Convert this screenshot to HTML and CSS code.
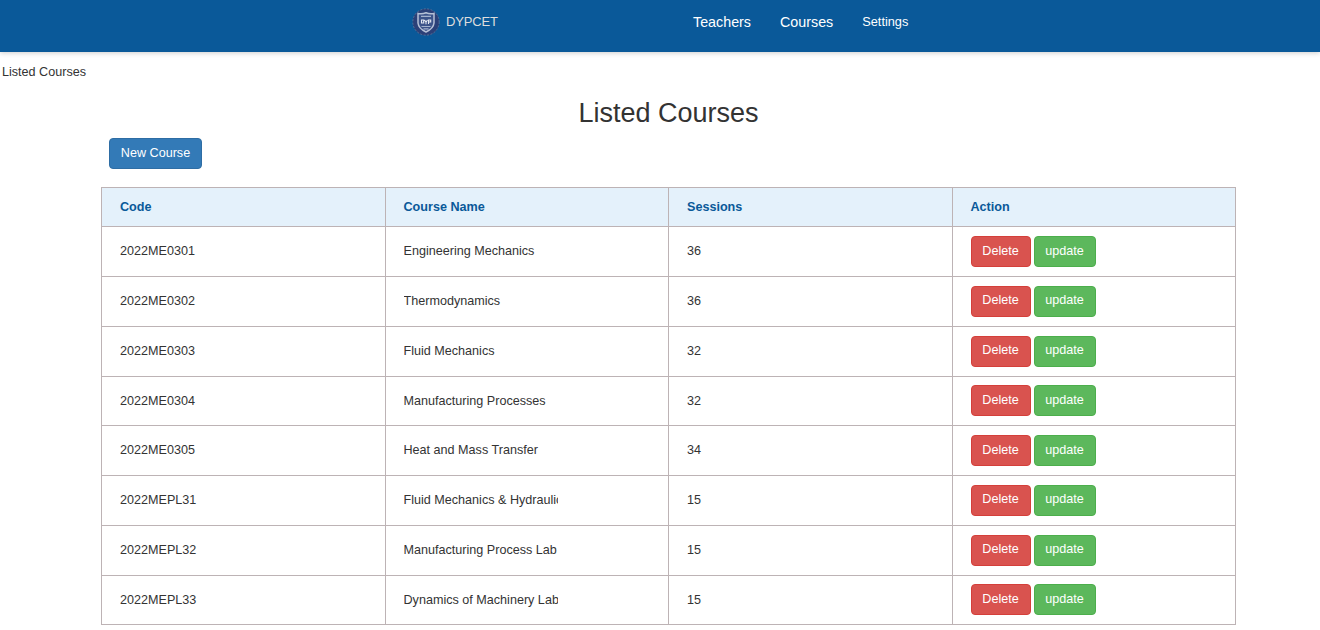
FILE: index.html
```html
<!DOCTYPE html>
<html lang="en">
<head>
<meta charset="utf-8">
<title>Listed Courses</title>
<link rel="stylesheet" href="styles.css">
</head>
<body>
<header class="navbar">
  <a class="brand">
    <svg class="logo" viewBox="0 0 28 28">
      <circle cx="14" cy="14" r="13.3" fill="#2b4078"/>
      <circle cx="14" cy="14" r="13.2" fill="none" stroke="#6c7f9f" stroke-width=".7" stroke-dasharray="2 1.5"/>
      <path d="M6 5.5 Q10 6.5 14 4.8 Q18 6.5 22 5.5 V15 Q21.5 20.5 14 24 Q6.500 20.5 6 15Z" fill="#3c5389" stroke="#b5c0d6" stroke-width="1.5"/>
      <path d="M9 8.300h10M9.500 18.500h9M11.500 20.800h5" stroke="#a3b1cd" stroke-width="1.2"/>
      <path d="M9.500 11.500v4M9.500 12h2.200v3h-2M12.500 12l1.500 2 1.500-2M14 14v2.300M16.500 16V12h2.200v2h-2" fill="none" stroke="#e4e8f1" stroke-width="1.1"/>
    </svg>
    <span class="brand-name">DYPCET</span>
  </a>
  <nav class="nav"><a>Teachers</a><a>Courses</a><a class="small">Settings</a></nav>
</header>
<div class="crumb">Listed Courses</div>
<main class="content">
  <h2 class="title">Listed Courses</h2>
  <button class="btn new">New Course</button>
  <div class="table">
    <div class="row head"><div>Code</div><div>Course Name</div><div>Sessions</div><div>Action</div></div>
    <div class="row"><div>2022ME0301</div><div><span class="name">Engineering Mechanics</span></div><div>36</div><div><button class="btn delete">Delete</button><button class="btn update">update</button></div></div>
    <div class="row"><div>2022ME0302</div><div><span class="name">Thermodynamics</span></div><div>36</div><div><button class="btn delete">Delete</button><button class="btn update">update</button></div></div>
    <div class="row"><div>2022ME0303</div><div><span class="name">Fluid Mechanics</span></div><div>32</div><div><button class="btn delete">Delete</button><button class="btn update">update</button></div></div>
    <div class="row"><div>2022ME0304</div><div><span class="name">Manufacturing Processes</span></div><div>32</div><div><button class="btn delete">Delete</button><button class="btn update">update</button></div></div>
    <div class="row"><div>2022ME0305</div><div><span class="name">Heat and Mass Transfer</span></div><div>34</div><div><button class="btn delete">Delete</button><button class="btn update">update</button></div></div>
    <div class="row"><div>2022MEPL31</div><div><span class="name">Fluid Mechanics &amp; Hydraulic</span></div><div>15</div><div><button class="btn delete">Delete</button><button class="btn update">update</button></div></div>
    <div class="row"><div>2022MEPL32</div><div><span class="name">Manufacturing Process Lab</span></div><div>15</div><div><button class="btn delete">Delete</button><button class="btn update">update</button></div></div>
    <div class="row"><div>2022MEPL33</div><div><span class="name">Dynamics of Machinery Lab</span></div><div>15</div><div><button class="btn delete">Delete</button><button class="btn update">update</button></div></div>
  </div>
</main>
</body>
</html>
```
FILE: styles.css
```css
* { box-sizing: border-box; }
body {
  margin: 0;
  height: 630px;
  overflow: hidden;
  background: #fff;
  color: #333;
  font: 12.6px/18px "Liberation Sans", Arial, sans-serif;
}
.navbar {
  display: flex;
  height: 52px;
  padding-left: 412px;
  background: #0a5999;
  box-shadow: 0 1px 5px rgba(0, 0, 0, .2);
}
.brand { display: flex; width: 281px; padding-top: 8px; color: #ddd; }
.logo { width: 28px; height: 28px; }
.brand-name { margin: 5px 0 0 6px; font-size: 13px; letter-spacing: -.15px; }
.nav { display: flex; gap: 29px; padding-top: 13px; color: #fff; font-size: 14.3px; }
.nav .small { font-size: 12.75px; }
.crumb { padding: 11px 0 0 2px; height: 46px; }
.content { margin-left: 101px; width: 1135px; }
.title { margin: 0; height: 40px; font-size: 27px; line-height: 30px; font-weight: 400; text-align: center; }
.btn {
  display: block;
  height: 31px;
  padding: 0 0 2px;
  border: 1px solid;
  border-radius: 4px;
  color: #fff;
  font: 12.6px/18px "Liberation Sans", Arial, sans-serif;
}
.new { width: 93px; margin: 0 0 18px 8px; background: #337ab7; border-color: #2e6da4; }
.delete { width: 60px; background: #d9534f; border-color: #d43f3a; }
.update { width: 62px; margin-left: 3px; background: #5cb85c; border-color: #4cae4c; }
.table { border: solid #bdb3b5; border-width: 0 1px 1px 0; }
.row { display: grid; grid-template-columns: repeat(4, 1fr); height: 49.755px; }
.row > div {
  display: flex;
  align-items: center;
  padding: 0 0 .8px 18px;
  border: solid #bdb3b5;
  border-width: 1px 0 0 1px;
}
.row > div:last-child { padding-bottom: 0; }
.row.head { height: 39.3px; background: #e4f1fb; color: #0a5999; font-weight: 700; }
.name { width: 154.5px; overflow: hidden; white-space: nowrap; }
```
